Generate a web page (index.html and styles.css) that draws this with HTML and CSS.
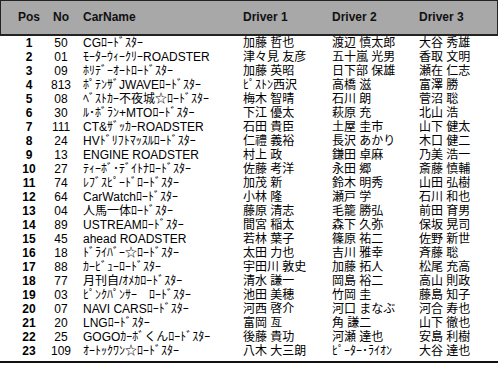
FILE: index.html
```html
<!DOCTYPE html>
<html lang="ja">
<head>
<meta charset="utf-8">
<title>Results</title>
<link rel="stylesheet" href="styles.css">
</head>
<body>
<div class="sheet">
  <div class="head row">
    <div class="c-pos">Pos</div><div class="c-no">No</div><div class="c-car">CarName</div><div class="c-d1">Driver 1</div><div class="c-d2">Driver 2</div><div class="c-d3">Driver 3</div>
  </div>
  <div class="body">
    <div class="row"><div class="c-pos">1</div><div class="c-no">50</div><div class="c-car">CGﾛｰﾄﾞｽﾀｰ</div><div class="c-d1">加藤 哲也</div><div class="c-d2">渡辺 慎太郎</div><div class="c-d3">大谷 秀雄</div></div>
    <div class="row"><div class="c-pos">2</div><div class="c-no">01</div><div class="c-car">ﾓｰﾀｰｳｨｰｸﾘｰROADSTER</div><div class="c-d1">津々見 友彦</div><div class="c-d2">五十嵐 光男</div><div class="c-d3">香取 文明</div></div>
    <div class="row"><div class="c-pos">3</div><div class="c-no">09</div><div class="c-car">ﾎﾘﾃﾞｰｵｰﾄﾛｰﾄﾞｽﾀｰ</div><div class="c-d1">加藤 英昭</div><div class="c-d2">日下部 保雄</div><div class="c-d3">瀬在 仁志</div></div>
    <div class="row"><div class="c-pos">4</div><div class="c-no">813</div><div class="c-car">ﾎﾟﾃﾝｻﾞJWAVEﾛｰﾄﾞｽﾀｰ</div><div class="c-d1">ﾋﾟｽﾄﾝ西沢</div><div class="c-d2">高橋 滋</div><div class="c-d3">富澤 勝</div></div>
    <div class="row"><div class="c-pos">5</div><div class="c-no">08</div><div class="c-car">ﾍﾞｽﾄｶｰ不夜城☆ﾛｰﾄﾞｽﾀｰ</div><div class="c-d1">梅木 智晴</div><div class="c-d2">石川 朗</div><div class="c-d3">菅沼 聡</div></div>
    <div class="row"><div class="c-pos">6</div><div class="c-no">30</div><div class="c-car">ﾙ･ﾎﾞﾗﾝ+MTOﾛｰﾄﾞｽﾀｰ</div><div class="c-d1">下江 優太</div><div class="c-d2">萩原 充</div><div class="c-d3">北山 浩</div></div>
    <div class="row"><div class="c-pos">7</div><div class="c-no">111</div><div class="c-car">CT&amp;ｻﾞｯｶｰROADSTER</div><div class="c-d1">石田 貴臣</div><div class="c-d2">土屋 圭市</div><div class="c-d3">山下 健太</div></div>
    <div class="row"><div class="c-pos">8</div><div class="c-no">24</div><div class="c-car">HVﾄﾞﾘﾌﾄﾏｯｽﾙﾛｰﾄﾞｽﾀｰ</div><div class="c-d1">仁禮 義裕</div><div class="c-d2">長沢 あかり</div><div class="c-d3">木口 健二</div></div>
    <div class="row"><div class="c-pos">9</div><div class="c-no">13</div><div class="c-car">ENGINE ROADSTER</div><div class="c-d1">村上 政</div><div class="c-d2">鎌田 卓麻</div><div class="c-d3">乃美 浩一</div></div>
    <div class="row"><div class="c-pos">10</div><div class="c-no">27</div><div class="c-car">ﾃｨｰﾎﾞ･ﾃﾞｲﾄﾅﾛｰﾄﾞｽﾀｰ</div><div class="c-d1">佐藤 考洋</div><div class="c-d2">永田 郷</div><div class="c-d3">斎藤 慎輔</div></div>
    <div class="row"><div class="c-pos">11</div><div class="c-no">74</div><div class="c-car">ﾚﾌﾞｽﾋﾟｰﾄﾞﾛｰﾄﾞｽﾀｰ</div><div class="c-d1">加茂 新</div><div class="c-d2">鈴木 明秀</div><div class="c-d3">山田 弘樹</div></div>
    <div class="row"><div class="c-pos">12</div><div class="c-no">64</div><div class="c-car">CarWatchﾛｰﾄﾞｽﾀｰ</div><div class="c-d1">小林 隆</div><div class="c-d2">瀬戸 学</div><div class="c-d3">石川 和也</div></div>
    <div class="row"><div class="c-pos">13</div><div class="c-no">04</div><div class="c-car">人馬一体ﾛｰﾄﾞｽﾀｰ</div><div class="c-d1">藤原 清志</div><div class="c-d2">毛籠 勝弘</div><div class="c-d3">前田 育男</div></div>
    <div class="row"><div class="c-pos">14</div><div class="c-no">89</div><div class="c-car">USTREAMﾛｰﾄﾞｽﾀｰ</div><div class="c-d1">間宮 稲太</div><div class="c-d2">森下 久弥</div><div class="c-d3">保坂 晃司</div></div>
    <div class="row"><div class="c-pos">15</div><div class="c-no">45</div><div class="c-car">ahead ROADSTER</div><div class="c-d1">若林 葉子</div><div class="c-d2">篠原 祐二</div><div class="c-d3">佐野 新世</div></div>
    <div class="row"><div class="c-pos">16</div><div class="c-no">18</div><div class="c-car">ﾄﾞﾗｲﾊﾞｰ☆ﾛｰﾄﾞｽﾀｰ</div><div class="c-d1">太田 力也</div><div class="c-d2">吉川 雅幸</div><div class="c-d3">斉藤 聡</div></div>
    <div class="row"><div class="c-pos">17</div><div class="c-no">88</div><div class="c-car">ｶｰﾋﾞｭｰﾛｰﾄﾞｽﾀｰ</div><div class="c-d1">宇田川 敦史</div><div class="c-d2">加藤 拓人</div><div class="c-d3">松尾 充高</div></div>
    <div class="row"><div class="c-pos">18</div><div class="c-no">77</div><div class="c-car">月刊自/ｵﾒｶﾛｰﾄﾞｽﾀｰ</div><div class="c-d1">清水 謙一</div><div class="c-d2">岡島 裕二</div><div class="c-d3">高山 則政</div></div>
    <div class="row"><div class="c-pos">19</div><div class="c-no">03</div><div class="c-car">ﾋﾟﾝｸﾊﾟﾝｻｰ　ﾛｰﾄﾞｽﾀｰ</div><div class="c-d1">池田 美穂</div><div class="c-d2">竹岡 圭</div><div class="c-d3">藤島 知子</div></div>
    <div class="row"><div class="c-pos">20</div><div class="c-no">07</div><div class="c-car">NAVI CARSﾛｰﾄﾞｽﾀｰ</div><div class="c-d1">河西 啓介</div><div class="c-d2">河口 まなぶ</div><div class="c-d3">河合 寿也</div></div>
    <div class="row"><div class="c-pos">21</div><div class="c-no">20</div><div class="c-car">LNGﾛｰﾄﾞｽﾀｰ</div><div class="c-d1">富岡 亙</div><div class="c-d2">角 謙二</div><div class="c-d3">山下 徹也</div></div>
    <div class="row"><div class="c-pos">22</div><div class="c-no">25</div><div class="c-car">GOGOｶｰﾎﾞくんﾛｰﾄﾞｽﾀｰ</div><div class="c-d1">後藤 貴功</div><div class="c-d2">河瀬 達也</div><div class="c-d3">安島 利樹</div></div>
    <div class="row"><div class="c-pos">23</div><div class="c-no">109</div><div class="c-car">ｵｰﾄｯｸﾜﾝ☆ﾛｰﾄﾞｽﾀｰ</div><div class="c-d1">八木 大三朗</div><div class="c-d2">ﾋﾟｰﾀｰ･ﾗｲｵﾝ</div><div class="c-d3">大谷 達也</div></div>
  </div>
</div>
</body>
</html>
```
FILE: styles.css
```css
html, body {
  margin: 0;
  padding: 0;
  background: #ffffff;
}
body {
  font-family: "Liberation Sans", Arial, "Noto Sans CJK JP", sans-serif;
  font-size: 12px;
  color: #000;
  width: 498px;
  height: 369px;
  overflow: hidden;
}
.sheet {
  display: flex;
  flex-direction: column;
}
.row {
  display: grid;
  grid-template-columns: 34px 30px 167px 89px 87px 1fr;
  padding-left: 12px;
  line-height: 14px;
  height: 14px;
  white-space: nowrap;
}
.head {
  background: #a8a8a8;
  border: 1px solid #222;
  border-bottom-width: 2px;
  height: 33px;
  line-height: 33px;
  padding-left: 11px;
  font-weight: bold;
  color: #111;
}
.body {
  padding-top: 0;
  padding-bottom: 3px;
  border-bottom: 2px solid #111;
}
.c-pos, .c-no {
  text-align: center;
}
.body .c-pos {
  font-weight: bold;
}
.c-car {
  padding-left: 7px;
}
```
